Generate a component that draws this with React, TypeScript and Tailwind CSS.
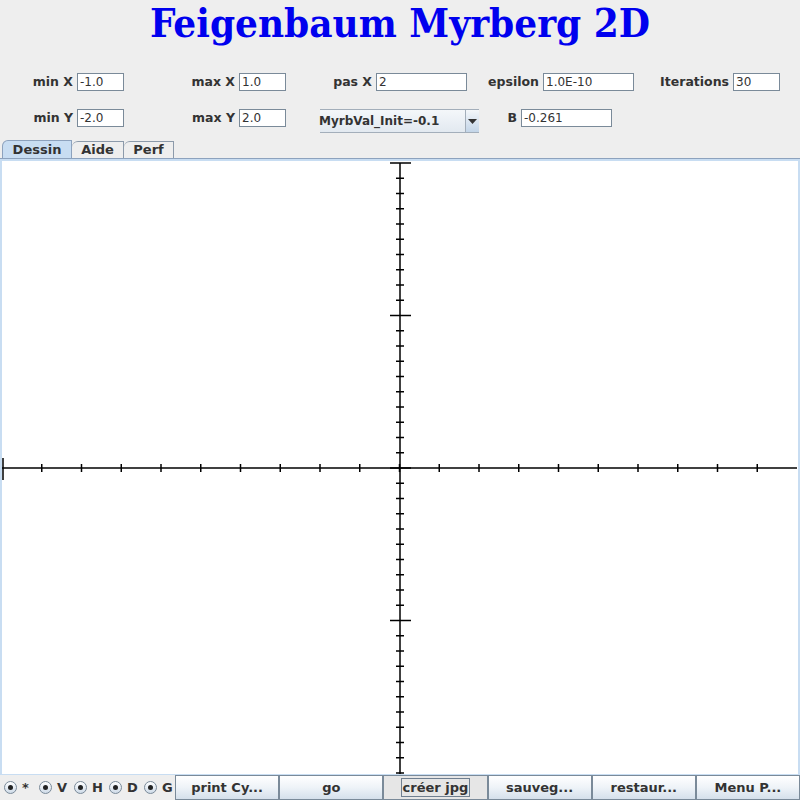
import React from "react";

const sans = { fontFamily: '"DejaVu Sans", Verdana, sans-serif' };

const Field = ({ value, w }: { value: string; w: string }) => (
  <div
    className={`${w} h-[18px] border border-[#7a8a99] bg-white pl-[2px] text-[12px] leading-[16px] text-[#333333] overflow-hidden whitespace-nowrap`}
  >
    {value}
  </div>
);

const Labeled = ({
  label,
  value,
  cell,
  w,
}: {
  label: string;
  value: string;
  cell: string;
  w: string;
}) => (
  <div className={`${cell} flex items-center justify-end gap-[4px] shrink-0`}>
    <span className="text-[12.5px] font-bold text-[#333333] whitespace-nowrap">{label}</span>
    <Field value={value} w={w} />
  </div>
);

const Radio = ({ label }: { label: string }) => (
  <div className="flex items-center w-[35px] shrink-0 pl-[4px] gap-[5px]">
    <div className="w-[13px] h-[13px] rounded-full border border-[#7a8a99] bg-gradient-to-b from-[#ffffff] to-[#cfdbe8] flex items-center justify-center">
      <div className="w-[5px] h-[5px] rounded-full bg-[#222222]" />
    </div>
    <span className="text-[13px] font-bold text-[#333333]">{label}</span>
  </div>
);

const Btn = ({ label, focus }: { label: string; focus?: boolean }) => (
  <div
    className={`flex-1 h-full border border-[#7a8a99] flex items-center justify-center text-[13px] font-bold text-[#333333] ${
      focus ? "bg-[#e6e6e6]" : "bg-gradient-to-b from-[#ffffff] via-[#eef3f8] to-[#d5e0eb]"
    }`}
  >
    {focus ? (
      <span className="border border-[#6f7f90] px-[1px] leading-[17px]">{label}</span>
    ) : (
      label
    )}
  </div>
);

const Axes = () => {
  const hx = Array.from({ length: 20 }, (_, k) => 2 + 39.75 * k);
  const vy = Array.from({ length: 41 }, (_, k) => 162 + 15.25 * k);
  return (
    <svg width="800" height="620" viewBox="0 158 800 620" className="block">
      <line x1="2" y1="467" x2="797" y2="467" stroke="#000" strokeWidth="1.5" />
      <line x1="400" y1="162" x2="400" y2="775" stroke="#000" strokeWidth="1.5" />
      {hx.map((x, k) =>
        k === 0 ? (
          <line key={k} x1={x + 1} y1="457" x2={x + 1} y2="479" stroke="#000" strokeWidth="1.5" />
        ) : (
          <line key={k} x1={x} y1="463" x2={x} y2="471" stroke="#000" strokeWidth="1.5" />
        )
      )}
      {vy.map((y, k) =>
        k % 10 === 0 && k !== 40 ? (
          <line key={k} x1="390" y1={y} x2="411" y2={y} stroke="#000" strokeWidth="1.5" />
        ) : (
          <line key={k} x1="396" y1={y} x2="404" y2={y} stroke="#000" strokeWidth="1.5" />
        )
      )}
    </svg>
  );
};

export default function App() {
  return (
    <div className="w-[800px] h-[800px] bg-[#eeeeee] flex flex-col overflow-hidden" style={sans}>
      {/* title */}
      <div className="h-[46px] flex items-center justify-center">
        <h1
          className="text-[40px] font-bold text-[#0000ee] leading-none font-stretch-condensed"
          style={{ fontFamily: '"DejaVu Serif", "Liberation Serif", serif' }}
        >
          Feigenbaum Myrberg 2D
        </h1>
      </div>

      {/* row 1 */}
      <div className="mt-[27px] h-[18px] flex items-center">
        <Labeled label="min X" value="-1.0" cell="w-[124px]" w="w-[47px]" />
        <Labeled label="max X" value="1.0" cell="w-[162px]" w="w-[47px]" />
        <Labeled label="pas X" value="2" cell="w-[181px]" w="w-[91px]" />
        <Labeled label="epsilon" value="1.0E-10" cell="w-[167px]" w="w-[91px]" />
        <Labeled label="Iterations" value="30" cell="w-[146px]" w="w-[47px]" />
      </div>

      {/* row 2 */}
      <div className="mt-[18px] h-[24px] flex items-start">
        <Labeled label="min Y" value="-2.0" cell="w-[124px]" w="w-[47px]" />
        <Labeled label="max Y" value="2.0" cell="w-[162px]" w="w-[47px]" />
        <div className="ml-[34px] w-[159px] h-[24px] flex border-y border-[#a3aeba] bg-gradient-to-b from-[#f4f7fa] to-[#e2e9f0] shrink-0">
          <div className="flex-1 flex items-center">
            <span className="-ml-[1px] text-[12px] font-bold text-[#333333] whitespace-nowrap">
              MyrbVal_Init=-0.1
            </span>
          </div>
          <div className="w-[14px] border-l border-[#a3aeba] bg-gradient-to-b from-[#f4f7fa] to-[#c3d5e8] flex items-center justify-center">
            <svg width="9" height="5" viewBox="0 0 9 5">
              <path d="M0 0 H9 L4.5 5 Z" fill="#333" />
            </svg>
          </div>
        </div>
        <Labeled label="B" value="-0.261" cell="w-[133px] h-[18px]" w="w-[91px]" />
      </div>

      {/* tabs */}
      <div className="mt-[7px] h-[18px] flex items-end pl-[2px]">
        <div className="w-[70px] h-[18px] border border-b-0 border-[#8da2bd] rounded-tl-[6px] bg-[#c8ddf2] flex items-center justify-center text-[13px] font-bold text-[#333333]">
          Dessin
        </div>
        <div className="w-[52px] h-[17px] border border-b-0 border-l-0 border-[#8c9aaa] rounded-tl-[6px] bg-[#eeeeee] flex items-center justify-center text-[13px] font-bold text-[#333333]">
          Aide
        </div>
        <div className="w-[50px] h-[17px] border border-b-0 border-l-0 border-[#8c9aaa] rounded-tl-[6px] bg-[#eeeeee] flex items-center justify-center text-[13px] font-bold text-[#333333]">
          Perf
        </div>
      </div>

      {/* drawing panel */}
      <div className="flex-1 border-t border-[#8da2bd] flex flex-col overflow-hidden">
        <div className="flex-1 border-t-2 border-x-2 border-b border-[#c8ddf2] bg-white overflow-hidden relative">
          <div className="-ml-[2px] -mt-[2px]">
            <Axes />
          </div>
        </div>
      </div>

      {/* bottom bar */}
      <div className="h-[25px] flex items-stretch">
        <div className="flex items-center w-[175px] shrink-0">
          <Radio label="*" />
          <Radio label="V" />
          <Radio label="H" />
          <Radio label="D" />
          <Radio label="G" />
        </div>
        <div className="flex-1 flex h-full">
          <Btn label="print Cy..." />
          <Btn label="go" />
          <Btn label="créer jpg" focus />
          <Btn label="sauveg..." />
          <Btn label="restaur..." />
          <Btn label="Menu P..." />
        </div>
      </div>
    </div>
  );
}
